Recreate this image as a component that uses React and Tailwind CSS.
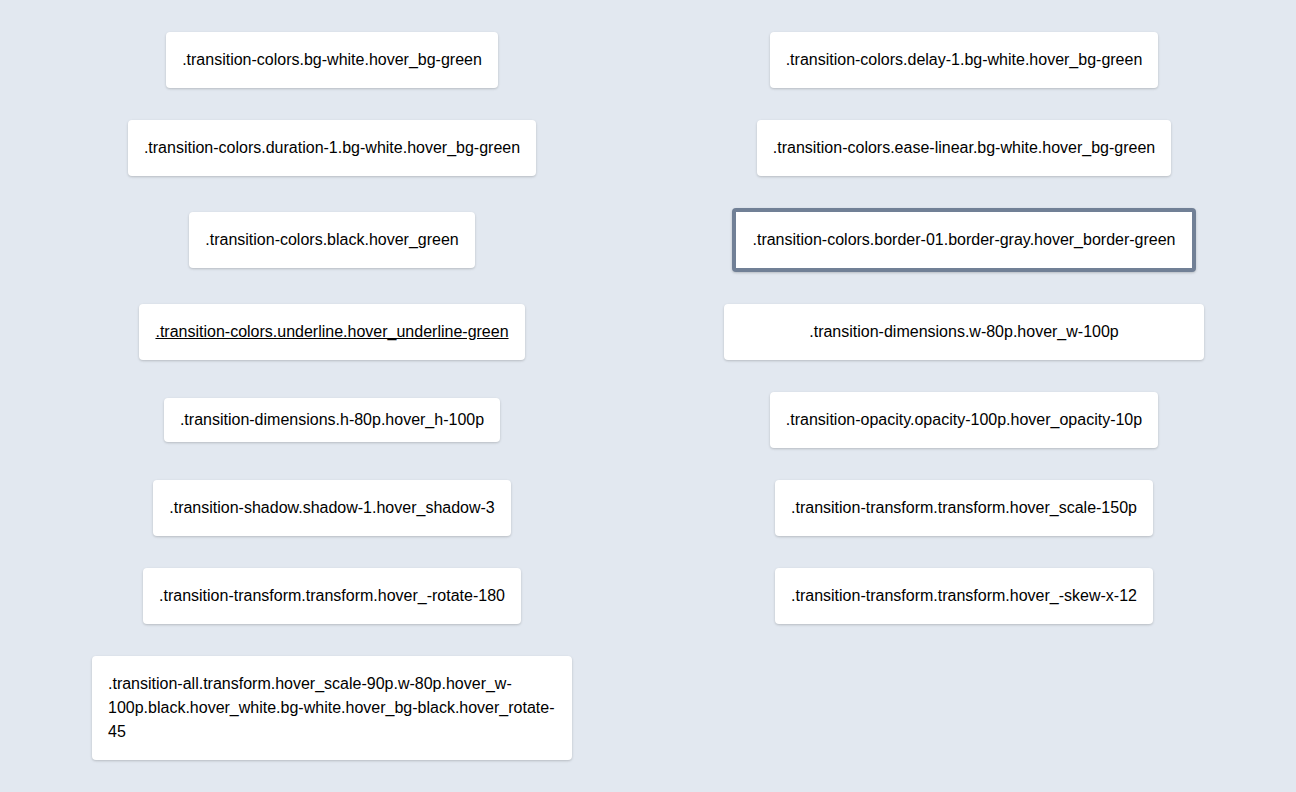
const box = 'bg-white rounded shadow-[0_1px_3px_rgba(0,0,0,0.12),0_1px_2px_rgba(0,0,0,0.08)] px-4 py-4 text-black';

function App() {
  return (
    <div
      className="min-h-screen bg-[#e2e8f0] p-8 grid grid-cols-2 gap-8 items-center justify-items-center text-base leading-6"
      style={{ fontFamily: '"Liberation Sans", Arial, sans-serif' }}
    >
      <div className={box}>.transition-colors.bg-white.hover_bg-green</div>
      <div className={box}>.transition-colors.delay-1.bg-white.hover_bg-green</div>

      <div className={box}>.transition-colors.duration-1.bg-white.hover_bg-green</div>
      <div className={box}>.transition-colors.ease-linear.bg-white.hover_bg-green</div>

      <div className={box}>.transition-colors.black.hover_green</div>
      <div className={`${box} border-4 border-[#718096]`}>
        .transition-colors.border-01.border-gray.hover_border-green
      </div>

      <div className={`${box} underline`}>.transition-colors.underline.hover_underline-green</div>
      <div className={`${box} w-[80%] text-center`}>.transition-dimensions.w-80p.hover_w-100p</div>

      <div className="bg-white rounded shadow-[0_1px_3px_rgba(0,0,0,0.12),0_1px_2px_rgba(0,0,0,0.08)] px-4 h-[44.8px] flex items-center text-black">
        .transition-dimensions.h-80p.hover_h-100p
      </div>
      <div className={box}>.transition-opacity.opacity-100p.hover_opacity-10p</div>

      <div className={box}>.transition-shadow.shadow-1.hover_shadow-3</div>
      <div className={box}>.transition-transform.transform.hover_scale-150p</div>

      <div className={box}>.transition-transform.transform.hover_-rotate-180</div>
      <div className={box}>.transition-transform.transform.hover_-skew-x-12</div>

      <div className={`${box} w-[80%] break-words`}>
        .transition-all.transform.hover_scale-90p.w-80p.hover_w-100p.black.hover_white.bg-white.hover_bg-black.hover_rotate-45
      </div>
    </div>
  );
}

export default App;
